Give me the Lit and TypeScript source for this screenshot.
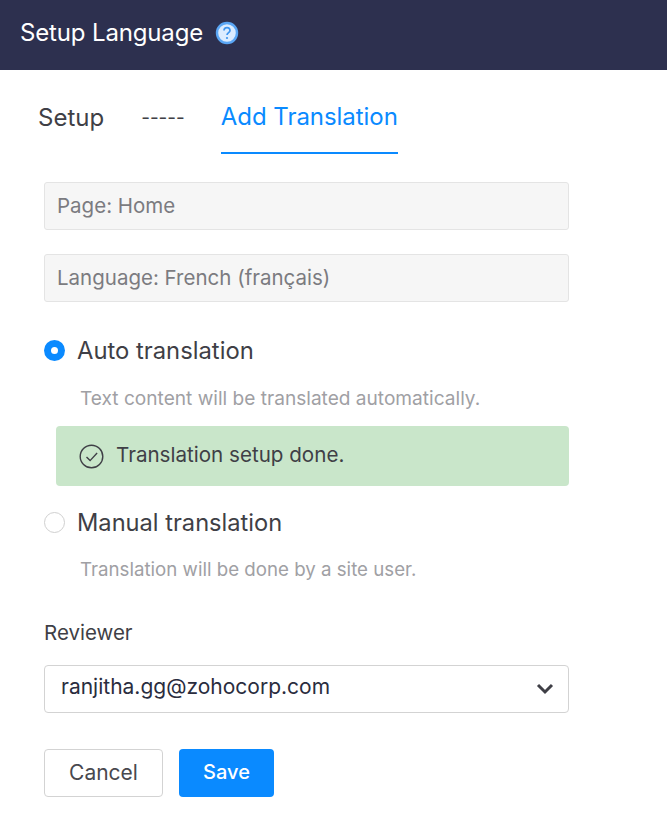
import { LitElement, html, css } from "lit";
import { customElement } from "lit/decorators.js";

@customElement("app-root")
export class AppRoot extends LitElement {
  static styles = css`
    :host { display: block; width: 667px; height: 817px; background: #fff; font-family: Inter, "Noto Sans", sans-serif; color: #3f3f46; overflow: hidden; }
    .header { height: 70px; background: #2d304f; display: flex; align-items: center; gap: 12px; padding: 0 20px 6px; box-sizing: border-box; color: #fff; font-size: 24px; letter-spacing: -0.15px; }
    .help { width: 24px; height: 24px; display: block; margin-top: 2px; }
    .tabs { display: flex; height: 84px; padding-left: 38px; align-items: stretch; font-size: 24px; }
    .tab { display: flex; align-items: center; height: 84px; padding-top: 10px; box-sizing: border-box; }
    .dash { margin-left: 37px; margin-right: 36px; font-size: 19px; }
    .active { color: #0a8aff; border-bottom: 2px solid #0a8aff; letter-spacing: -0.05px; }
    .form { padding: 28px 0 0 44px; width: 525px; display: flex; flex-direction: column; }
    .ro { height: 48px; box-sizing: border-box; border: 1px solid #e4e4e4; background: #f6f6f6; border-radius: 3px; display: flex; align-items: center; padding: 0 12px 2px; font-size: 20.5px; color: #7b7b80; margin-bottom: 24px; }
    .radio { display: flex; align-items: center; gap: 12px; font-size: 23.8px; height: 32px; }
    .dot { width: 21px; height: 21px; border-radius: 50%; box-sizing: border-box; flex: none; }
    .dot.on { background: #0a8aff; display: flex; align-items: center; justify-content: center; }
    .dot.on::after { content: ""; width: 7px; height: 7px; background: #fff; border-radius: 50%; }
    .dot.off { border: 1px solid #d0d0d0; background: #fff; }
    .hint { font-size: 19.1px; line-height: 24px; color: #a0a0a4; margin-left: 36px; }
    .done { margin-left: 12px; height: 60px; background: #c9e6ca; border-radius: 4px; display: flex; align-items: center; gap: 12px; padding: 0 0 0 23px; font-size: 20.6px; color: #3f3f46; }
    .done span { margin-bottom: 4px; }
    .label { font-size: 20.5px; line-height: 24px; }
    .select { height: 48px; box-sizing: border-box; border: 1px solid #d3d3d3; border-radius: 4px; display: flex; align-items: center; justify-content: space-between; padding: 0 14px 0 16px; font-size: 21px; color: #2a2d3e; }
    .select span { margin-bottom: 5px; }
    .actions { display: flex; gap: 16px; margin-top: 36px; }
    .btn { height: 48px; box-sizing: border-box; border-radius: 4px; display: flex; align-items: center; justify-content: center; font-size: 21px; padding-bottom: 2px; }
    .cancel { width: 119px; border: 1px solid #d3d3d3; color: #48484e; }
    .save { width: 95px; background: #0a8aff; color: #fff; font-weight: 500; font-size: 20px; }
    .auto { margin-top: 8px; }
    .hint-auto { margin-top: 20px; }
    .done { margin-top: 16px; }
    .manual { margin-top: 20px; font-size: 23.65px; }
    .hint-manual { margin-top: 20px; font-size: 18.7px; }
    .label { margin-top: 39px; margin-bottom: -1px; }
    .select { margin-top: 21px; }
  `;

  render() {
    return html`
      <div class="header">
        <span>Setup Language</span>
        <svg class="help" viewBox="0 0 24 24">
          <circle cx="12" cy="12" r="10" fill="#dcecff" stroke="#5aa6f5" stroke-width="2.4"/>
          <path d="M9 9.6a3 3 0 0 1 6 0c0 2-3 2.2-3 4.4" fill="none" stroke="#3f95ee" stroke-width="1.7"/>
          <circle cx="12" cy="17" r="1.1" fill="#3f95ee"/>
        </svg>
      </div>
      <div class="tabs">
        <div class="tab">Setup</div>
        <div class="tab dash">-----</div>
        <div class="tab active">Add Translation</div>
      </div>
      <div class="form">
        <div class="ro">Page: Home</div>
        <div class="ro">Language: French (français)</div>
        <div class="radio auto"><span class="dot on"></span>Auto translation</div>
        <div class="hint hint-auto">Text content will be translated automatically.</div>
        <div class="done">
          <svg width="25" height="25" viewBox="0 0 25 25" fill="none" stroke="#3f3f46" stroke-width="1.4">
            <circle cx="12.5" cy="12.5" r="11.3"/>
            <path d="M7.5 13l3.6 3.6 7-7.6"/>
          </svg>
          <span>Translation setup done.</span>
        </div>
        <div class="radio manual"><span class="dot off"></span>Manual translation</div>
        <div class="hint hint-manual">Translation will be done by a site user.</div>
        <div class="label">Reviewer</div>
        <div class="select">
          <span>ranjitha.gg@zohocorp.com</span>
          <svg width="18" height="12" viewBox="0 0 18 12" fill="none" stroke="#3f3f46" stroke-width="3">
            <path d="M2 2l7 7 7-7"/>
          </svg>
        </div>
        <div class="actions">
          <div class="btn cancel">Cancel</div>
          <div class="btn save">Save</div>
        </div>
      </div>
    `;
  }
}
